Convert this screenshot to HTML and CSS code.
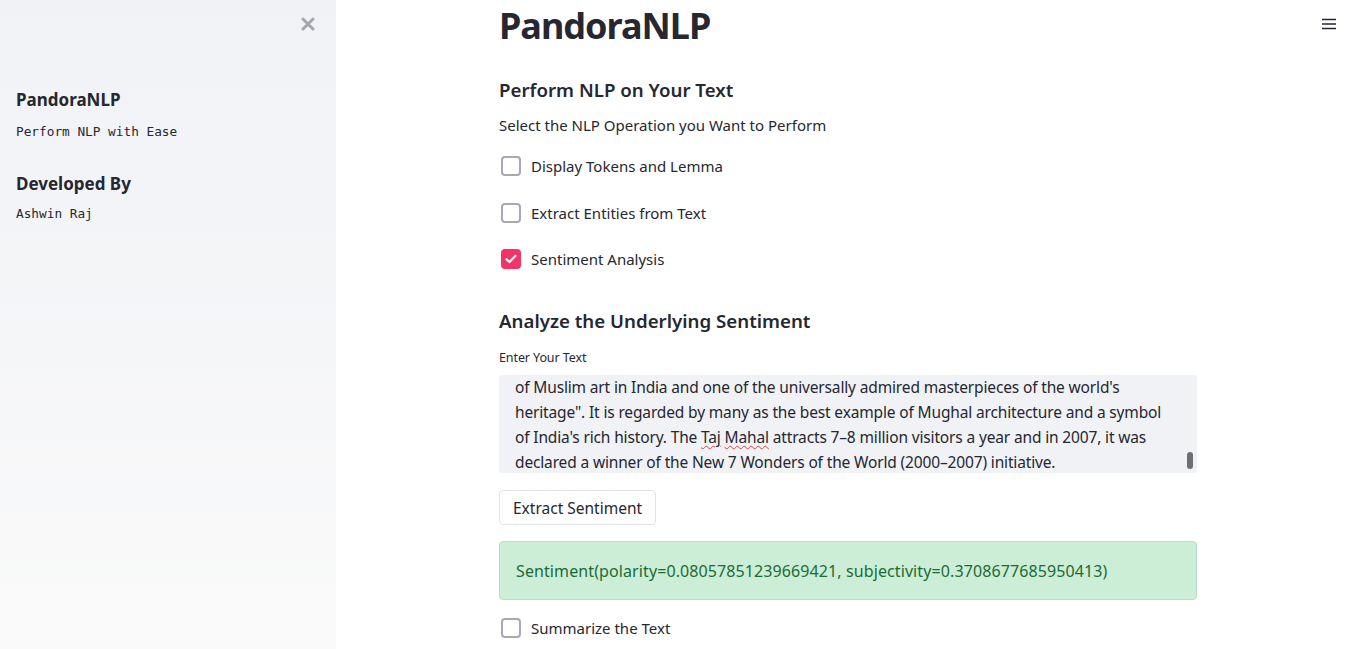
FILE: index.html
```html
<!DOCTYPE html>
<html>
<head>
<meta charset="utf-8">
<link rel="stylesheet" href="styles.css">
</head>
<body>
<div class="app">
  <aside class="sidebar">
    <div class="side-top">
      <button class="close" aria-label="Close">
        <svg width="14" height="14" viewBox="0 0 14 14"><path d="M2 2L12 12M12 2L2 12" stroke="#a3a6ad" stroke-width="3" stroke-linecap="round"/></svg>
      </button>
    </div>
    <div class="side-content">
      <h3 class="side-title">PandoraNLP</h3>
      <p class="side-mono">Perform NLP with Ease</p>
      <h3 class="side-title second">Developed By</h3>
      <p class="side-mono last">Ashwin Raj</p>
    </div>
  </aside>
  <main class="main">
    <button class="menu" aria-label="Menu">
      <svg width="14" height="12" viewBox="0 0 14 12"><path d="M0 1.5H14M0 6H14M0 10.5H14" stroke="#262730" stroke-width="1.6"/></svg>
    </button>
    <div class="block">
      <h1 class="title">PandoraNLP</h1>
      <h3 class="subhead">Perform NLP on Your Text</h3>
      <p class="text">Select the NLP Operation you Want to Perform</p>
      <label class="check first"><span class="box"></span><span>Display Tokens and Lemma</span></label>
      <label class="check"><span class="box"></span><span>Extract Entities from Text</span></label>
      <label class="check"><span class="box on"><svg width="12" height="10" viewBox="0 0 12 10"><path d="M1.5 5.2L4.5 8L10.5 1.8" fill="none" stroke="#fff" stroke-width="2.2" stroke-linecap="round" stroke-linejoin="round"/></svg></span><span>Sentiment Analysis</span></label>
      <h3 class="subhead second">Analyze the Underlying Sentiment</h3>
      <div class="field-label">Enter Your Text</div>
      <div class="textarea">
        <div class="ta-text">
          <div>of Muslim art in India and one of the universally admired masterpieces of the world's</div>
          <div>heritage". It is regarded by many as the best example of Mughal architecture and a symbol</div>
          <div>of India's rich history. The <span class="spell">Taj</span> <span class="spell">Mahal</span> attracts 7–8 million visitors a year and in 2007, it was</div>
          <div>declared a winner of the New 7 Wonders of the World (2000–2007) initiative.</div>
        </div>
        <span class="thumb"></span>
      </div>
      <button class="btn">Extract Sentiment</button>
      <div class="success">Sentiment(polarity=0.08057851239669421, subjectivity=0.3708677685950413)</div>
      <label class="check last"><span class="box"></span><span>Summarize the Text</span></label>
    </div>
  </main>
</div>
</body>
</html>
```
FILE: styles.css
```css
* { box-sizing: border-box; }
html, body { margin: 0; padding: 0; }
body {
  font-family: "Noto Sans", "Open Sans", sans-serif;
  color: #262730;
  background: #fff;
  overflow: hidden;
}
.app {
  display: flex;
  height: 649px;
}
.sidebar {
  width: 336px;
  flex: 0 0 336px;
  background: linear-gradient(180deg, #f0f2f6 0%, #fafafa 100%);
  display: flex;
  flex-direction: column;
}
.side-top {
  height: 78px;
  display: flex;
  justify-content: flex-end;
  align-items: flex-start;
  padding: 17px 21px 0 0;
}
.close {
  border: 0;
  background: transparent;
  padding: 0;
  width: 14px;
  height: 14px;
  display: flex;
}
.side-content {
  padding: 0 16px;
}
.side-title {
  margin: 0;
  font-size: 17px;
  font-weight: 700;
  line-height: 28px;
  padding-top: 8px;
}
.side-title.second { padding-top: 29px; }
.side-mono {
  margin: 9px 0 0;
  font-family: "DejaVu Sans Mono", "Liberation Mono", monospace;
  font-size: 12.75px;
  line-height: 18px;
  color: #262730;
}
.side-mono.last { margin-top: 7px; }
.main {
  flex: 1;
  display: flex;
  justify-content: center;
  position: relative;
}
.menu {
  position: absolute;
  top: 18px;
  right: 22px;
  border: 0;
  background: transparent;
  padding: 0;
  display: flex;
}
.block {
  width: 698px;
  margin-left: 2px;
  display: flex;
  flex-direction: column;
  align-items: flex-start;
}
.title {
  margin: 0;
  font-size: 36px;
  font-weight: 700;
  line-height: 52px;
  letter-spacing: -1px;
}
.subhead {
  margin: 20px 0 0;
  font-size: 18.7px;
  font-weight: 600;
  line-height: 36px;
}
.subhead.second { margin-top: 26px; }
.text {
  margin: 0;
  font-size: 15px;
  line-height: 34px;
}
.check {
  display: flex;
  align-items: center;
  gap: 10px;
  height: 36px;
  margin-top: 10.5px;
  font-size: 15px;
}
.check.first { margin-top: 6px; }
.check.last { margin-top: 10px; }
.box {
  width: 20px;
  height: 20px;
  border: 2px solid #a6a9b1;
  border-radius: 4px;
  margin-left: 2px;
  display: flex;
  align-items: center;
  justify-content: center;
}
.box.on {
  background: #f63366;
  border-color: #f63366;
}
.field-label {
  font-size: 12.5px;
  line-height: 18px;
  margin-top: 10px;
  letter-spacing: -0.1px;
}
.textarea {
  position: relative;
  width: 698px;
  height: 98px;
  flex: 0 0 98px;
  margin-top: 8px;
  background: #f0f2f6;
  border-radius: 4px;
  overflow: hidden;
  padding: 0 16px;
}
.ta-text {
  font-size: 15.5px;
  line-height: 25px;
  letter-spacing: -0.15px;
  white-space: nowrap;
}
.spell {
  text-decoration: underline wavy #e0413a;
  text-decoration-thickness: 1px;
  text-underline-offset: 2px;
}
.thumb {
  position: absolute;
  right: 4px;
  top: 77px;
  width: 6px;
  height: 17px;
  background: #6d6f74;
  border-radius: 3px;
}
.btn {
  margin-top: 17px;
  height: 35px;
  padding: 0 13px;
  background: #fff;
  border: 1px solid #e2e3e8;
  border-radius: 4px;
  font-family: inherit;
  font-size: 15.5px;
  color: #262730;
  letter-spacing: 0;
}
.success {
  margin-top: 16px;
  width: 698px;
  height: 59px;
  flex: 0 0 59px;
  display: flex;
  align-items: center;
  padding: 0 16px;
  background: #cdeed6;
  border: 1px solid #b7e1c3;
  border-radius: 4px;
  color: #1a6b35;
  font-size: 16px;
  letter-spacing: 0.1px;
}
```
